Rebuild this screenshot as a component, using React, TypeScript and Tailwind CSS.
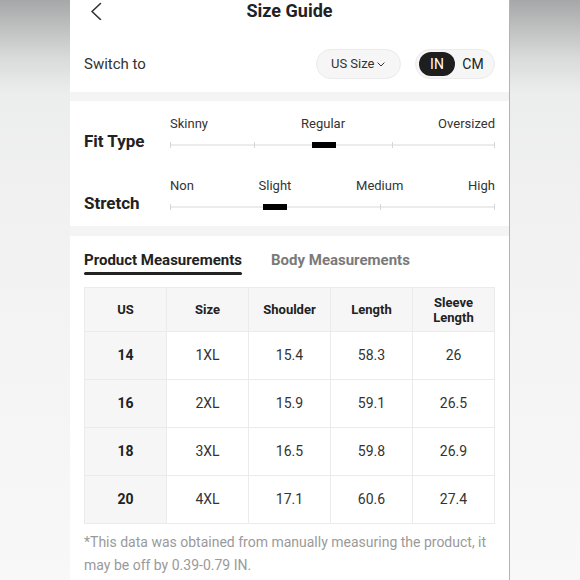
import React from "react";

const rows = [
  ["14", "1XL", "15.4", "58.3", "26"],
  ["16", "2XL", "15.9", "59.1", "26.5"],
  ["18", "3XL", "16.5", "59.8", "26.9"],
  ["20", "4XL", "17.1", "60.6", "27.4"],
];

function FitTrack() {
  return (
    <div className="relative h-[12px]">
      <div className="absolute left-0 right-0 top-[5px] h-[2px] bg-[#ececec]" />
      <div className="absolute left-0 top-[3px] h-[6px] w-[1px] bg-[#d6d6d6]" />
      <div className="absolute left-[84px] top-[3px] h-[6px] w-[1px] bg-[#d6d6d6]" />
      <div className="absolute left-[222px] top-[3px] h-[6px] w-[1px] bg-[#d6d6d6]" />
      <div className="absolute right-0 top-[3px] h-[6px] w-[1px] bg-[#d6d6d6]" />
      <div className="absolute left-[142px] top-[3px] h-[6px] w-[24px] bg-black" />
    </div>
  );
}

function StretchTrack() {
  return (
    <div className="relative h-[12px]">
      <div className="absolute left-0 right-0 top-[5px] h-[2px] bg-[#ececec]" />
      <div className="absolute left-0 top-[3px] h-[6px] w-[1px] bg-[#d6d6d6]" />
      <div className="absolute left-[210px] top-[3px] h-[6px] w-[1px] bg-[#d6d6d6]" />
      <div className="absolute right-0 top-[3px] h-[6px] w-[1px] bg-[#d6d6d6]" />
      <div className="absolute left-[93px] top-[3px] h-[6px] w-[24px] bg-black" />
    </div>
  );
}

export default function App() {
  return (
    <div className="flex h-[580px] w-[580px] overflow-hidden bg-[linear-gradient(to_bottom,#a6a7a8_0%,#d9dbda_10%,#eceded_16%,#f1f1f1_35%,#f4f4f4_60%,#f8f8f8_100%)] font-['Roboto',sans-serif]">
      <div className="w-[70px] shrink-0" />
      <div className="flex w-[440px] shrink-0 flex-col border-r border-[#b3b3b3] bg-white">
        {/* Header */}
        <div className="grid h-[22px] grid-cols-[1fr_auto_1fr] items-center">
          <div className="flex items-center pl-[20px]">
            <svg width="12" height="18" viewBox="0 0 12 18" fill="none">
              <path d="M10.5 1.5 L2 9.5 L10.5 17.5" stroke="#333" strokeWidth="1.6" strokeLinecap="round" strokeLinejoin="round" />
            </svg>
          </div>
          <div className="text-[18px] font-bold leading-[22px] text-[#222]">Size Guide</div>
          <div />
        </div>

        {/* Switch row */}
        <div className="flex items-center justify-between px-[14px] pb-[13px] pt-[27px]">
          <span className="text-[15px] leading-[20px] text-[#333]">Switch to</span>
          <div className="flex items-center gap-[14px]">
            <div className="flex h-[30px] w-[85px] items-center gap-[2px] rounded-full border border-[#ebebeb] bg-[#f6f6f6] pl-[14px] text-[13px] text-[#333]">
              <span>US Size</span>
              <svg width="8" height="5" viewBox="0 0 8 5" fill="none">
                <path d="M0.6 0.6 L4 4 L7.4 0.6" stroke="#333" strokeWidth="1" />
              </svg>
            </div>
            <div className="flex h-[30px] items-center rounded-full border border-[#ebebeb] bg-[#f6f6f6] px-[3px]">
              <span className="flex h-[24px] w-[36px] items-center justify-center rounded-full bg-[#1e1e1e] text-[14px] text-white">IN</span>
              <span className="flex h-[24px] w-[36px] items-center justify-center text-[14px] text-[#222]">CM</span>
            </div>
          </div>
        </div>

        <div className="h-[9px] bg-[#f4f4f4]" />

        {/* Fit section */}
        <div className="flex flex-col px-[14px] pb-[13px] pt-[15px]">
          <div className="flex items-end">
            <div className="w-[86px] text-[17px] font-bold leading-[20px] text-[#222]">Fit Type</div>
            <div className="flex flex-1 flex-col gap-[7px]">
              <div className="flex justify-between text-[13px] leading-[16px] text-[#333]">
                <span>Skinny</span>
                <span>Regular</span>
                <span>Oversized</span>
              </div>
              <FitTrack />
            </div>
          </div>
          <div className="mt-[27px] flex items-end">
            <div className="w-[86px] text-[17px] font-bold leading-[20px] text-[#222]">Stretch</div>
            <div className="flex flex-1 flex-col gap-[7px]">
              <div className="flex justify-between text-[13px] leading-[16px] text-[#333]">
                <span>Non</span>
                <span>Slight</span>
                <span>Medium</span>
                <span>High</span>
              </div>
              <StretchTrack />
            </div>
          </div>
        </div>

        <div className="h-[10px] bg-[#f4f4f4]" />

        {/* Tabs */}
        <div className="flex flex-col px-[14px] pt-[15px]">
          <div className="flex items-start gap-[29px]">
            <div className="flex flex-col">
              <span className="text-[15px] font-bold leading-[18px] text-[#222]">Product Measurements</span>
              <div className="mt-[3px] h-[3px] rounded-full bg-[#222]" />
            </div>
            <span className="text-[15px] font-bold leading-[18px] text-[#7a7a7a]">Body Measurements</span>
          </div>

          {/* Table */}
          <div className="mt-[12px] grid grid-cols-5 border-l border-t border-[#ebebeb]">
            {["US", "Size", "Shoulder", "Length"].map((h) => (
              <div key={h} className="flex h-[44px] items-center justify-center border-b border-r border-[#ebebeb] bg-[#f6f6f6] text-[13px] font-bold text-[#222]">
                {h}
              </div>
            ))}
            <div className="flex h-[44px] flex-col items-center justify-center border-b border-r border-[#ebebeb] bg-[#f6f6f6] text-center text-[13px] font-bold leading-[15px] text-[#222]">
              <span>Sleeve</span>
              <span>Length</span>
            </div>
            {rows.map((r) =>
              r.map((c, i) => (
                <div
                  key={r[0] + "-" + i}
                  className={
                    i === 0
                      ? "flex h-[48px] items-center justify-center border-b border-r border-[#ebebeb] bg-[#f6f6f6] text-[14px] font-bold text-[#222]"
                      : "flex h-[48px] items-center justify-center border-b border-r border-[#ebebeb] text-[14px] text-[#333]"
                  }
                >
                  {c}
                </div>
              ))
            )}
          </div>

          <p className="mt-[7px] text-[14px] leading-[23px] text-[#9a9a9a]">
            *This data was obtained from manually measuring the product, it may be off by 0.39-0.79 IN.
          </p>
        </div>
      </div>
      <div className="flex-1" />
    </div>
  );
}
